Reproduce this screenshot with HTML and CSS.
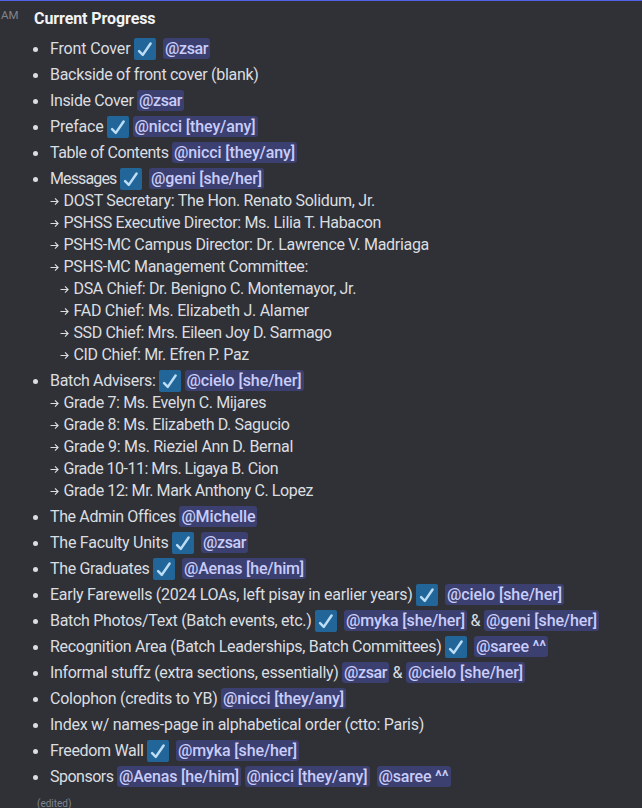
FILE: index.html
```html
<!DOCTYPE html>
<html lang="en">
<head>
<meta charset="utf-8">
<title>Current Progress</title>
<link rel="stylesheet" href="styles.css">
</head>
<body>
<svg class="defs" aria-hidden="true">
<symbol id="check" viewBox="0 0 22 22"><rect width="22" height="22" rx="2" fill="#226699"/><path d="M5.1 13.2 8.8 16.9 16.6 5.5" fill="none" stroke="#bbddf5" stroke-width="2.5" stroke-linecap="round" stroke-linejoin="round"/></symbol>
<symbol id="arrow" viewBox="0 0 9 9"><path d="M.5 4.5h7.6M5 1.4l3.1 3.1L5 7.6"/></symbol>
</svg>
<main class="message">
<time class="time">AM</time>
<div class="content">
<h1 class="title"><span data-width="121.5">Current Progress</span></h1>
<ul class="list">
<li><div class="row"><span data-width="80.5">Front Cover</span><svg class="emoji spaced"><use href="#check"/></svg><span class="mention" data-width="43">@zsar</span></div></li>
<li><div class="row"><span data-width="208.5">Backside of front cover (blank)</span></div></li>
<li><div class="row"><span data-width="83.5">Inside Cover</span><span class="mention" data-width="43">@zsar</span></div></li>
<li><div class="row"><span data-width="53.5">Preface</span><svg class="emoji"><use href="#check"/></svg><span class="mention" data-width="121">@nicci [they/any]</span></div></li>
<li><div class="row"><span data-width="118.5">Table of Contents</span><span class="mention" data-width="121">@nicci [they/any]</span></div></li>
<li><div class="row"><span data-width="66.5">Messages</span><svg class="emoji spaced"><use href="#check"/></svg><span class="mention" data-width="111">@geni [she/her]</span></div>
<div class="sub"><svg class="arrow"><use href="#arrow"/></svg><span data-width="311.5">DOST Secretary: The Hon. Renato Solidum, Jr.</span></div>
<div class="sub"><svg class="arrow"><use href="#arrow"/></svg><span data-width="317.5">PSHSS Executive Director: Ms. Lilia T. Habacon</span></div>
<div class="sub"><svg class="arrow"><use href="#arrow"/></svg><span data-width="365.5">PSHS-MC Campus Director: Dr. Lawrence V. Madriaga</span></div>
<div class="sub"><svg class="arrow"><use href="#arrow"/></svg><span data-width="244.5">PSHS-MC Management Committee:</span></div>
<div class="sub deep"><svg class="arrow"><use href="#arrow"/></svg><span data-width="282.5">DSA Chief: Dr. Benigno C. Montemayor, Jr.</span></div>
<div class="sub deep"><svg class="arrow"><use href="#arrow"/></svg><span data-width="235.5">FAD Chief: Ms. Elizabeth J. Alamer</span></div>
<div class="sub deep"><svg class="arrow"><use href="#arrow"/></svg><span data-width="258">SSD Chief: Mrs. Eileen Joy D. Sarmago</span></div>
<div class="sub deep"><svg class="arrow"><use href="#arrow"/></svg><span data-width="175.5">CID Chief: Mr. Efren P. Paz</span></div></li>
<li><div class="row"><span data-width="105.5">Batch Advisers:</span><svg class="emoji"><use href="#check"/></svg><span class="mention" data-width="115">@cielo [she/her]</span></div>
<div class="sub"><svg class="arrow"><use href="#arrow"/></svg><span data-width="202.5">Grade 7: Ms. Evelyn C. Mijares</span></div>
<div class="sub"><svg class="arrow"><use href="#arrow"/></svg><span data-width="226">Grade 8: Ms. Elizabeth D. Sagucio</span></div>
<div class="sub"><svg class="arrow"><use href="#arrow"/></svg><span data-width="229.5">Grade 9: Ms. Rieziel Ann D. Bernal</span></div>
<div class="sub"><svg class="arrow"><use href="#arrow"/></svg><span data-width="214.5">Grade 10-11: Mrs. Ligaya B. Cion</span></div>
<div class="sub"><svg class="arrow"><use href="#arrow"/></svg><span data-width="249.5">Grade 12: Mr. Mark Anthony C. Lopez</span></div></li>
<li><div class="row"><span data-width="124.5">The Admin Offices</span><span class="mention" data-width="74">@Michelle</span></div></li>
<li><div class="row"><span data-width="118.5">The Faculty Units</span><svg class="emoji spaced"><use href="#check"/></svg><span class="mention" data-width="43">@zsar</span></div></li>
<li><div class="row"><span data-width="99.5">The Graduates</span><svg class="emoji spaced"><use href="#check"/></svg><span class="mention" data-width="120">@Aenas [he/him]</span></div></li>
<li><div class="row"><span data-width="362.5">Early Farewells (2024 LOAs, left pisay in earlier years)</span><svg class="emoji spaced"><use href="#check"/></svg><span class="mention" data-width="115">@cielo [she/her]</span></div></li>
<li><div class="row"><span data-width="261.5">Batch Photos/Text (Batch events, etc.)</span><svg class="emoji spaced"><use href="#check"/></svg><span class="mention" data-width="119">@myka [she/her]</span><span data-width="10">&amp;</span><span class="mention" data-width="111">@geni [she/her]</span></div></li>
<li><div class="row"><span data-width="391.5">Recognition Area (Batch Leaderships, Batch Committees)</span><svg class="emoji spaced"><use href="#check"/></svg><span class="mention" data-width="70">@saree ^^</span></div></li>
<li><div class="row"><span data-width="288.5">Informal stuffz (extra sections, essentially)</span><span class="mention" data-width="43">@zsar</span><span data-width="10">&amp;</span><span class="mention" data-width="115">@cielo [she/her]</span></div></li>
<li><div class="row"><span data-width="167.5">Colophon (credits to YB)</span><span class="mention" data-width="121">@nicci [they/any]</span></div></li>
<li><div class="row"><span data-width="374">Index w/ names-page in alphabetical order (ctto: Paris)</span></div></li>
<li><div class="row"><span data-width="93.5">Freedom Wall</span><svg class="emoji spaced"><use href="#check"/></svg><span class="mention" data-width="119">@myka [she/her]</span></div></li>
<li><div class="row"><span data-width="63.5">Sponsors</span><span class="mention" data-width="120">@Aenas [he/him]</span><span class="mention spaced" data-width="121">@nicci [they/any]</span><span class="mention" data-width="70">@saree ^^</span></div></li>
</ul>
<div class="edited">(edited)</div>
</div>
</main>
<script src="fit.js"></script>
</body>
</html>
```
FILE: fit.js
```js
// Track each label so that its text fills the width given in data-width.
for (const el of document.querySelectorAll('[data-width]')) {
  const range = document.createRange();
  range.selectNodeContents(el);
  const spare = el.dataset.width - range.getBoundingClientRect().width;
  el.style.letterSpacing = (spare / el.textContent.length).toFixed(3) + 'px';
}
```
FILE: styles.css
```css
* { box-sizing: border-box; }
html, body { margin: 0; height: 100%; overflow: hidden; }
body { background: #303136; color: #dbdee1; font: 16px/22px Roboto, "Noto Sans", sans-serif; }
.defs { display: none; }
.message { display: flex; height: 808px; padding-top: 7px; border-top: 1px solid #5360e8; white-space: nowrap; overflow: hidden; }
.time { width: 34px; padding-left: 1px; font-size: 11.5px; line-height: 15px; color: #80848e; }
.title { margin: 0 0 8px; font-size: 16px; font-weight: 700; line-height: 22px; color: #f2f3f5; }
.list { margin: 0; padding: 0 0 0 16px; list-style: none; }
.list li { margin-bottom: 4px; }
.list li::before { content: ""; float: left; width: 5px; height: 5px; margin: 9px 0 0 -17px; border-radius: 50%; background: #dbdee1; }
.row { display: flex; gap: 3.5px; height: 22px; }
.sub { display: flex; align-items: center; height: 22px; }
.deep { padding-left: 10px; }
.arrow { width: 9px; height: 9px; margin-right: 4.5px; fill: none; stroke: #dbdee1; stroke-width: 1.1; }
.emoji { width: 22px; height: 22px; flex: none; }
.spaced { margin-right: 3.5px; }
.mention { height: 21px; padding: 0 2px; border-radius: 3px; background: #3c4070; color: #c9cdfb; font-weight: 500; }
.edited { margin-top: 9px; padding-left: 3px; font-size: 10px; line-height: 14px; color: #80848e; }
```
